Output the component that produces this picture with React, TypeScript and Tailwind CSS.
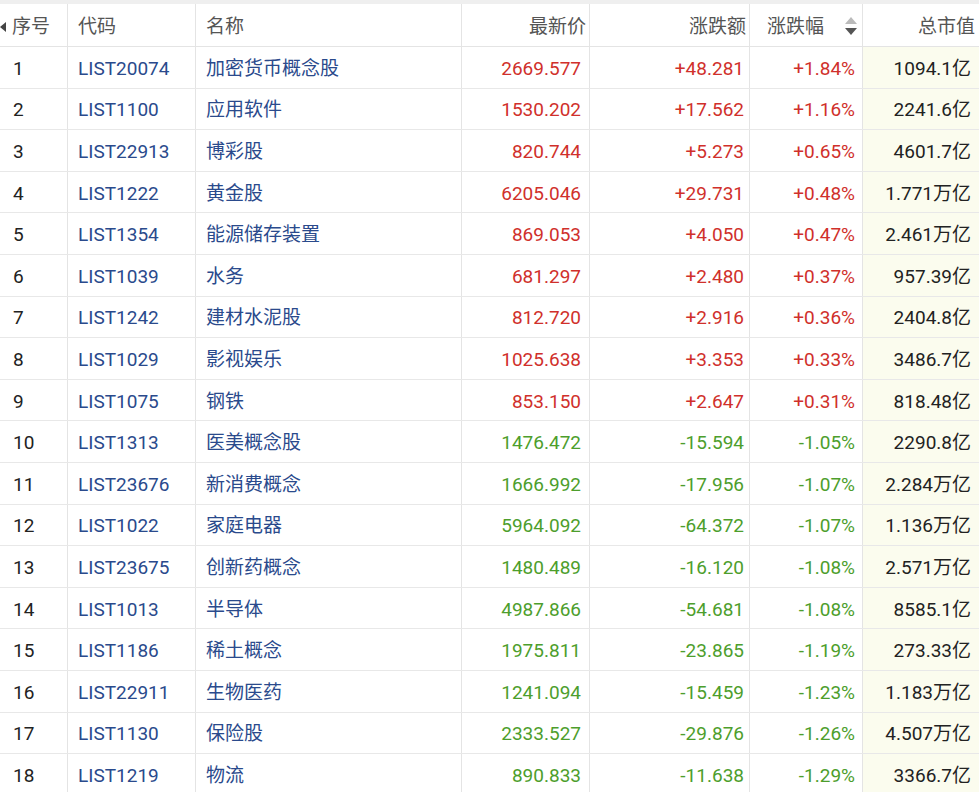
import React from "react";

const rows = [
    ["1", "LIST20074", "加密货币概念股", "2669.577", "+48.281", "+1.84%", "1094.1亿"],
    ["2", "LIST1100", "应用软件", "1530.202", "+17.562", "+1.16%", "2241.6亿"],
    ["3", "LIST22913", "博彩股", "820.744", "+5.273", "+0.65%", "4601.7亿"],
    ["4", "LIST1222", "黄金股", "6205.046", "+29.731", "+0.48%", "1.771万亿"],
    ["5", "LIST1354", "能源储存装置", "869.053", "+4.050", "+0.47%", "2.461万亿"],
    ["6", "LIST1039", "水务", "681.297", "+2.480", "+0.37%", "957.39亿"],
    ["7", "LIST1242", "建材水泥股", "812.720", "+2.916", "+0.36%", "2404.8亿"],
    ["8", "LIST1029", "影视娱乐", "1025.638", "+3.353", "+0.33%", "3486.7亿"],
    ["9", "LIST1075", "钢铁", "853.150", "+2.647", "+0.31%", "818.48亿"],
    ["10", "LIST1313", "医美概念股", "1476.472", "-15.594", "-1.05%", "2290.8亿"],
    ["11", "LIST23676", "新消费概念", "1666.992", "-17.956", "-1.07%", "2.284万亿"],
    ["12", "LIST1022", "家庭电器", "5964.092", "-64.372", "-1.07%", "1.136万亿"],
    ["13", "LIST23675", "创新药概念", "1480.489", "-16.120", "-1.08%", "2.571万亿"],
    ["14", "LIST1013", "半导体", "4987.866", "-54.681", "-1.08%", "8585.1亿"],
    ["15", "LIST1186", "稀土概念", "1975.811", "-23.865", "-1.19%", "273.33亿"],
    ["16", "LIST22911", "生物医药", "1241.094", "-15.459", "-1.23%", "1.183万亿"],
    ["17", "LIST1130", "保险股", "2333.527", "-29.876", "-1.26%", "4.507万亿"],
    ["18", "LIST1219", "物流", "890.833", "-11.638", "-1.29%", "3366.7亿"],
];

const cell = "border-r border-[#e4e4e4] flex items-center pt-[2px]";

export default function App() {
    return (
        <div
            className="w-[979px] h-[792px] overflow-hidden bg-white text-[19px] leading-none"
            style={{ fontFamily: '"Roboto", "Noto Sans CJK SC", sans-serif' }}
        >
            <div className="h-[4px] bg-[#efefef]" />

            {/* header */}
            <div className="grid grid-cols-[68px_128px_266px_128px_160px_113px_1fr] h-[43px] border-b border-[#e4e4e4] text-[#555]">
                <div className={`${cell} pl-[12px] relative`}>
                    <span className="absolute left-0 top-[18px] w-0 h-0 border-y-[5px] border-y-transparent border-r-[6px] border-r-[#444]" />
                    序号
                </div>
                <div className={`${cell} pl-[10px]`}>代码</div>
                <div className={`${cell} pl-[10px]`}>名称</div>
                <div className={`${cell} justify-end pr-[3px]`}>最新价</div>
                <div className={`${cell} justify-end pr-[3px]`}>涨跌额</div>
                <div className={`${cell} pl-[17px] pr-[4px] justify-between`}>
                    涨跌幅
                    <span className="flex flex-col gap-[4px] mr-[1px]">
                        <span className="w-0 h-0 border-x-[6px] border-x-transparent border-b-[7px] border-b-[#bbb]" />
                        <span className="w-0 h-0 border-x-[6px] border-x-transparent border-t-[7px] border-t-[#555]" />
                    </span>
                </div>
                <div className="flex items-center justify-end pr-[4px] pt-[2px]">总市值</div>
            </div>

            {rows.map((r) => {
                const up = r[4].startsWith("+");
                const color = up ? "text-[#d0302b]" : "text-[#4d9e2c]";
                return (
                    <div
                        key={r[0]}
                        className="grid grid-cols-[68px_128px_266px_128px_160px_113px_1fr] h-[41.6px] border-b border-[#e8e8e8]"
                    >
                        <div className={`${cell} pl-[13px] text-[#222]`}>{r[0]}</div>
                        <div className={`${cell} pl-[10px] text-[#2a4a8c]`}>{r[1]}</div>
                        <div className={`${cell} pl-[10px] text-[#2a4a8c]`}>{r[2]}</div>
                        <div className={`${cell} justify-end pr-[8px] ${color}`}>{r[3]}</div>
                        <div className={`${cell} justify-end pr-[5px] ${color}`}>{r[4]}</div>
                        <div className={`${cell} justify-end pr-[7px] ${color}`}>{r[5]}</div>
                        <div className="flex items-center justify-end pr-[8px] pt-[2px] bg-[#fbfcee] text-[#222]">{r[6]}</div>
                    </div>
                );
            })}
        </div>
    );
}
